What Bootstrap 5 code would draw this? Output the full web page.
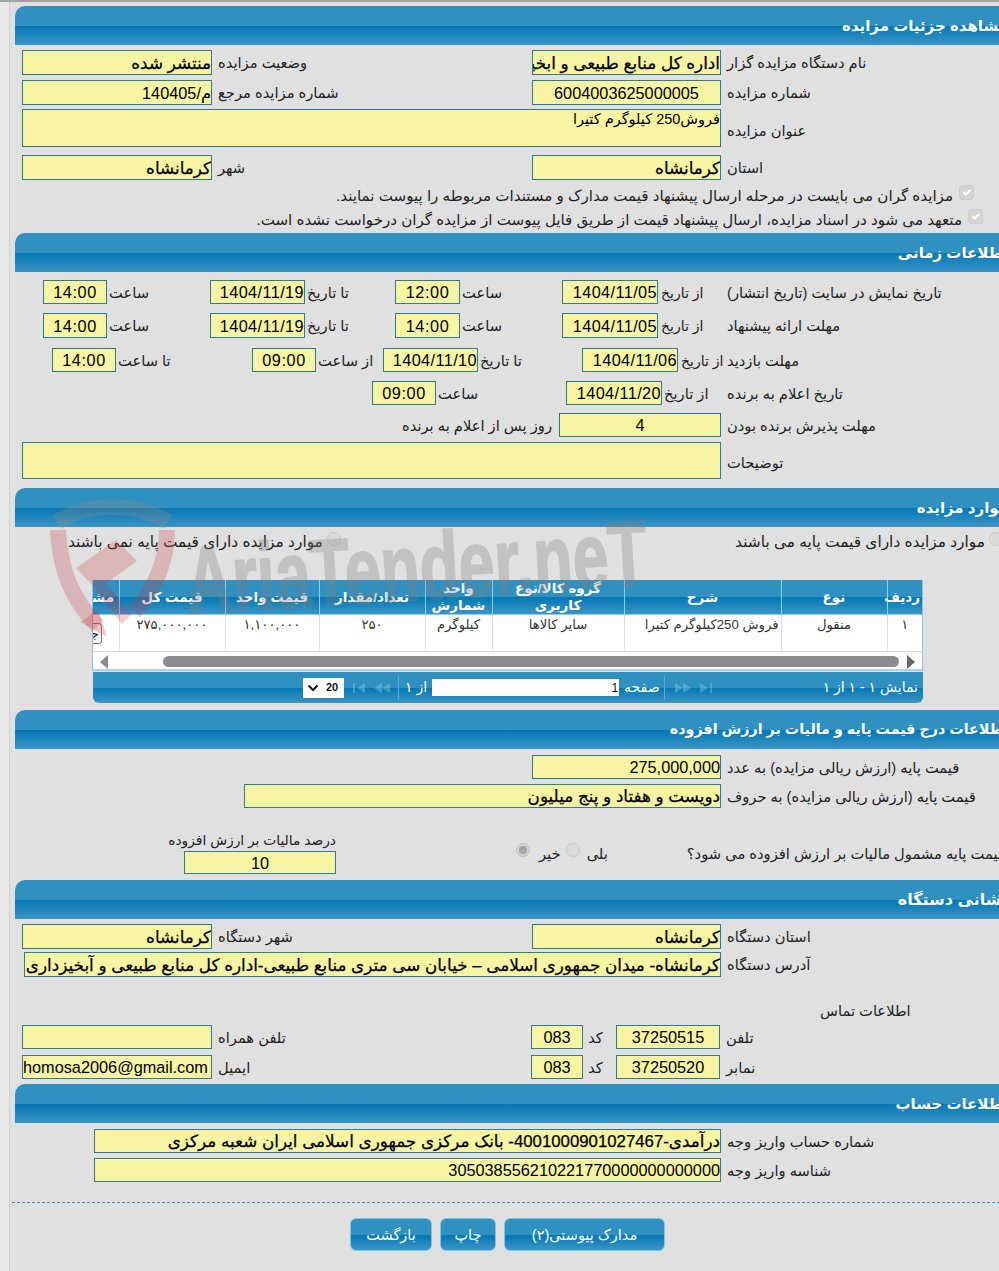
<!DOCTYPE html>
<html lang="fa">
<head>
<meta charset="utf-8">
<title>مشاهده جزئیات مزایده</title>
<link href="https://cdn.jsdelivr.net/npm/bootstrap@5.3.0/dist/css/bootstrap.min.css" rel="stylesheet">
<style>
html,body{height:1271px;overflow:hidden}
body{background:#e0e0e0;font-family:"Liberation Sans","DejaVu Sans",sans-serif;font-size:14.7px;color:#222;border-top:2px solid #a4a4a4}
.stripe{position:absolute;left:0;top:2px;width:10px;height:1269px;background:#e8e8e8;border-right:1px solid #d0d0d0}
.page{position:relative;width:1015px;padding:4px 0 0 15px}
.bar{height:39px;background:linear-gradient(#3090c0 0,#3090c0 50%,#0478b4 51%,#3b94c6 100%);border-top-left-radius:10px;color:#fff;font-weight:700;font-size:15px;line-height:39px;text-align:right;padding-right:7px;white-space:nowrap}
.bar.sm{font-size:14.3px}.bar.lg{font-size:16px}
.sec{margin-left:-15px}
.sb1{height:227px}.sb2{height:255px}.sb3{height:222px}.sb4{height:170px}.sb5{height:204px}
.sec>.bar{margin-left:15px}
.ln{display:grid;align-items:center;height:25px}
.lab{padding:2px 0 0 6px;text-align:left;white-space:nowrap;overflow:visible}
.lab.lo{padding-top:6px}
.fld.form-control{height:100%;min-height:0;background:#f7f4a3;border:1px solid #2f7c8e;border-radius:0;padding:1px 0 0;font-size:16.3px;color:#000;box-shadow:none;font-family:"Liberation Sans","DejaVu Sans",sans-serif;line-height:1.15;resize:none}
.fld.big{font-size:16.8px;-webkit-text-stroke:.25px #000}
.fld.dt{text-align:right;letter-spacing:.4px}
.fld.tm{letter-spacing:.6px}
textarea.fld.form-control{font-size:14.5px}
.t3{margin-top:3px}.t4{margin-top:4px}.t5{margin-top:5px}.t6{margin-top:6px}.t8{margin-top:8px}.t9{margin-top:9px}.t10{margin-top:10px}.t25{margin-top:25px}.t26{margin-top:26px}
.h24{height:24px}.h23{height:23px}.h38{height:38px}.h37{height:37px}
.two{padding-left:22px;grid-template-columns:190px 320px 189px 1fr}
.wide{padding-left:22px;grid-template-columns:699px 1fr}
.wide24{padding-left:24px;grid-template-columns:697px 1fr}
.chk{justify-content:flex-end;gap:6px;height:24px;font-size:15.1px}
.chk .form-check-input{width:15px;height:15px;margin:-8px 0 0;background-color:#d4d4d4;border-color:#ccc;opacity:1;flex:none}
.ck1{padding-right:41px}.ck2{padding-right:32px}
.dr{padding-left:43px;grid-template-columns:64px 103px 95px 90px 65px 102px 96px 69px 1fr}
.dr3{padding-left:52px;grid-template-columns:64px 136px 64px 67px 95px 104px 96px 49px 1fr}
.dr4{padding-left:372px;grid-template-columns:64px 130px 96px 65px 1fr}
.dr5{padding-left:402px;grid-template-columns:157px 162px 1fr}
.lab.tight{padding-left:2px}
.lab.hold{padding-left:0}
.lab.near{padding-left:3px;font-size:14px}
.radios{height:20px;margin-top:5px;padding-left:68px;padding-right:12px;justify-content:space-between;font-size:15.4px}
.rdo.form-check-input{width:14px;height:14px;margin:-6px 0 0;background-color:#dcdcdc;border-color:#c8c8c8;opacity:1;flex:none}
.rdo.form-check-input:checked{background-color:#d4d4d4;border-color:#c0c0c0;background-image:radial-gradient(circle,#a8a8a8 0,#a8a8a8 4px,transparent 4.5px)}
.grp{gap:4px;align-items:center}
.tw{width:831px;margin:28px 0 0 92px}
.tscroll{height:91px;overflow:hidden;background:#fff;border:1px solid #8cc4e4;border-top:0;border-bottom:2px solid #a6d3ee}
.tbl.table{table-layout:fixed;width:865px;margin:0;--bs-table-bg:transparent;border-collapse:collapse}
.c1{width:35px}.c2{width:106px}.c3{width:157px}.c4{width:132px}.c5{width:67px}.c6{width:106px}.c7{width:94px}.c8{width:106px}.c9{width:62px}
.tbl th{height:34px;padding:0 2px;background:linear-gradient(#3090c0 0,#3090c0 50%,#0478b4 51%,#3b94c6 100%);color:#fff;font-size:13.5px;line-height:17px;text-align:center;vertical-align:middle;border:0;border-left:1px solid #8ad2f4;border-bottom:1px solid #8ad2f4;white-space:normal}
.tbl td{height:37px;padding:0 2px;font-size:13.2px;color:#333;text-align:center;vertical-align:top;border:0;border-left:1px solid #ddd;border-bottom:1px solid #ddd;white-space:nowrap}
.tbl td.tdesc{text-align:right}
.cellbtn{display:block;width:44px;height:21px;margin:8px 15px 0 0;padding:0;font-size:13px;border:1px solid #777;border-radius:3px;background:#f4f4f4;color:#222}
.track{height:18px;padding:4px 7px 0;}
.thumb{height:11px;background:#8c8c8c;border-radius:6px;flex:1}
.arr{flex:none;margin-top:-1px}
.arrl{margin-right:55px}.arrr{margin-left:8px}
.pager{height:31px;margin:1px 0 0 1px;background:linear-gradient(#3090c0 0,#3090c0 50%,#0478b4 51%,#3b94c6 100%);border-radius:0 0 6px 6px;color:#fff;font-size:14px;padding:3px 5px 3px 210px;align-items:center}
.sel{width:41px;height:20px;padding:0 4px;background:#fff;color:#111;font-size:11px;font-weight:700;margin-right:8px;gap:7px}
.pginp.form-control{width:187px;height:17px;min-height:0;padding:0 1px;border:0;border-radius:0;font-size:12px;margin:0 5px;color:#111}
.ic{opacity:.35;flex:none}
.sep{width:1px;height:24px;background:#5aa7cf;margin:0 6px 0 2px}
.pgl{white-space:nowrap}
.pgsp{margin-left:auto}
.vbase{width:189px}.vword{width:477px}
.v3{padding-left:168px;height:41px;align-items:start;grid-template-columns:168px 1fr}
.vtx{height:18px;line-height:16px;white-space:nowrap;text-align:right;font-size:13.8px}
.fld.vin.form-control{display:block;width:152px;height:23px;margin-left:16px}
.vq{height:100%;padding:2px 0 0 180px;align-items:flex-start;white-space:nowrap}
.vq span{margin-top:8px}
.vq .rdo.form-check-input{margin:8px 0 0}
.vq .q3.form-check-input{margin-left:5px}
.q1{margin-left:9px}.q5{margin-left:7px}.vq .q4{margin-left:79px}
.ctitle{height:16px;line-height:16px;padding-left:820px}
.ct{padding-left:22px;grid-template-columns:190px 319px 52px 33px 104px 1fr;height:24px}
.acc{padding-left:94px;grid-template-columns:627px 1fr;height:24px}
.lab.c{padding-left:5px}
.dash{margin:20px 0 0 12px;width:1003px;border-top:1px dashed #3d8fc0;height:0}
.acts{margin:15px 0 0 350px;gap:8px}
.btn.act{height:33px;padding:0;background:linear-gradient(#3090c0 0,#3090c0 50%,#0478b4 51%,#3b94c6 100%);border:1px solid #7ccaf0;border-radius:6px;color:#fff;font-size:14.5px;line-height:30px}
.b1{width:82px}.b2{width:56px}.b3{width:161px}
.wm{position:absolute;left:0;top:0;pointer-events:none}
</style>
</head>
<body>
<div class="stripe"></div>
<div class="page">

<section class="sec sb1">
  <div class="bar" dir="rtl">مشاهده جزئیات مزایده</div>
  <div class="ln two t5">
    <input class="form-control fld big" dir="rtl" readonly value="منتشر شده">
    <div class="lab" dir="rtl">وضعیت مزایده</div>
    <input class="form-control fld big" dir="rtl" readonly value="اداره کل منابع طبیعی و ابخیزداری استان کرمانشاه">
    <div class="lab" dir="rtl">نام دستگاه مزایده گزار</div>
  </div>
  <div class="ln two t5">
    <input class="form-control fld" dir="rtl" readonly value="م/140405">
    <div class="lab" dir="rtl">شماره مزایده مرجع</div>
    <input class="form-control fld text-center" dir="rtl" readonly value="6004003625000005">
    <div class="lab" dir="rtl">شماره مزایده</div>
  </div>
  <div class="ln wide t4 h38">
    <textarea class="form-control fld" dir="rtl" readonly>فروش250 کیلوگرم کتیرا</textarea>
    <div class="lab lo" dir="rtl">عنوان مزایده</div>
  </div>
  <div class="ln two t8">
    <input class="form-control fld big" dir="rtl" readonly value="کرمانشاه">
    <div class="lab" dir="rtl">شهر</div>
    <input class="form-control fld big" dir="rtl" readonly value="کرمانشاه">
    <div class="lab" dir="rtl">استان</div>
  </div>
  <div class="d-flex align-items-center t4 chk ck1" dir="ltr">
    <span dir="rtl">مزایده گران می بایست در مرحله ارسال پیشنهاد قیمت مدارک و مستندات مربوطه را پیوست نمایند.</span>
    <input class="form-check-input" type="checkbox" checked disabled>
  </div>
  <div class="d-flex align-items-center chk ck2" dir="ltr">
    <span dir="rtl">متعهد می شود در اسناد مزایده، ارسال پیشنهاد قیمت از طریق فایل پیوست از مزایده گران درخواست نشده است.</span>
    <input class="form-check-input" type="checkbox" checked disabled>
  </div>
</section>

<section class="sec sb2">
  <div class="bar" dir="rtl">اطلاعات زمانی</div>
  <div class="ln dr t8 h24">
    <input class="form-control fld tm text-center" readonly value="14:00">
    <div class="lab tight" dir="rtl">ساعت</div>
    <input class="form-control fld dt" readonly value="1404/11/19">
    <div class="lab tight" dir="rtl">تا تاریخ</div>
    <input class="form-control fld tm text-center" readonly value="12:00">
    <div class="lab tight" dir="rtl">ساعت</div>
    <input class="form-control fld dt" readonly value="1404/11/05">
    <div class="lab near" dir="rtl">از تاریخ</div>
    <div class="lab hold" dir="rtl">تاریخ نمایش در سایت (تاریخ انتشار)</div>
  </div>
  <div class="ln dr t9">
    <input class="form-control fld tm text-center" readonly value="14:00">
    <div class="lab tight" dir="rtl">ساعت</div>
    <input class="form-control fld dt" readonly value="1404/11/19">
    <div class="lab tight" dir="rtl">تا تاریخ</div>
    <input class="form-control fld tm text-center" readonly value="14:00">
    <div class="lab tight" dir="rtl">ساعت</div>
    <input class="form-control fld dt" readonly value="1404/11/05">
    <div class="lab near" dir="rtl">از تاریخ</div>
    <div class="lab hold" dir="rtl">مهلت ارائه پیشنهاد</div>
  </div>
  <div class="ln dr3 t10 h24">
    <input class="form-control fld tm text-center" readonly value="14:00">
    <div class="lab tight" dir="rtl">تا ساعت</div>
    <input class="form-control fld tm text-center" readonly value="09:00">
    <div class="lab tight" dir="rtl">از ساعت</div>
    <input class="form-control fld dt" readonly value="1404/11/10">
    <div class="lab tight" dir="rtl">تا تاریخ</div>
    <input class="form-control fld dt" readonly value="1404/11/06">
    <div class="lab near" dir="rtl">از تاریخ</div>
    <div class="lab hold" dir="rtl">مهلت بازدید</div>
  </div>
  <div class="ln dr4 t9 h24">
    <input class="form-control fld tm text-center" readonly value="09:00">
    <div class="lab tight" dir="rtl">ساعت</div>
    <input class="form-control fld dt" readonly value="1404/11/20">
    <div class="lab tight" dir="rtl">از تاریخ</div>
    <div class="lab hold" dir="rtl">تاریخ اعلام به برنده</div>
  </div>
  <div class="ln dr5 t8 h23">
    <div class="lab hold" dir="rtl">روز پس از اعلام به برنده</div>
    <input class="form-control fld text-center" readonly value="4">
    <div class="lab" dir="rtl">مهلت پذیرش برنده بودن</div>
  </div>
  <div class="ln wide t6 h37">
    <textarea class="form-control fld" dir="rtl" readonly></textarea>
    <div class="lab lo" dir="rtl">توضیحات</div>
  </div>
</section>

<section class="sec sb3">
  <div class="bar" dir="rtl">موارد مزایده</div>
  <div class="d-flex radios">
    <div class="d-flex grp">
      <span dir="rtl">موارد مزایده دارای قیمت پایه نمی باشند</span>
      <input class="form-check-input rdo" type="radio" disabled>
    </div>
    <div class="d-flex grp">
      <span dir="rtl">موارد مزایده دارای قیمت پایه می باشند</span>
      <input class="form-check-input rdo" type="radio" disabled>
    </div>
  </div>
  <div class="tw">
    <div class="tscroll" dir="rtl">
      <table class="table tbl">
        <colgroup><col class="c1"><col class="c2"><col class="c3"><col class="c4"><col class="c5"><col class="c6"><col class="c7"><col class="c8"><col class="c9"></colgroup>
        <thead><tr><th>ردیف</th><th>نوع</th><th>شرح</th><th>گروه کالا/نوع کاربری</th><th>واحد شمارش</th><th>تعداد/مقدار</th><th>قیمت واحد</th><th>قیمت کل</th><th>مشاهده</th></tr></thead>
        <tbody><tr><td>۱</td><td>منقول</td><td class="tdesc">فروش 250کیلوگرم کتیرا</td><td>سایر کالاها</td><td>کیلوگرم</td><td>۲۵۰</td><td>۱,۱۰۰,۰۰۰</td><td>۲۷۵,۰۰۰,۰۰۰</td><td><button class="cellbtn" type="button">جزئیات</button></td></tr></tbody>
      </table>
      <div class="d-flex track" dir="ltr">
        <svg class="arr arrl" width="8" height="14" viewBox="0 0 8 14"><path d="M8 0L0 7l8 7z" fill="#8c8c8c"/></svg>
        <div class="thumb"></div>
        <svg class="arr arrr" width="8" height="14" viewBox="0 0 8 14"><path d="M0 0l8 7-8 7z" fill="#666"/></svg>
      </div>
    </div>
    <div class="d-flex pager" dir="ltr">
      <div class="d-flex align-items-center sel"><svg width="12" height="8" viewBox="0 0 12 8"><path d="M1.5 1.5L6 6l4.500-4.500" fill="none" stroke="#111" stroke-width="2"/></svg><span>20</span></div>
      <svg class="ic" width="14" height="10" viewBox="0 0 14 10"><path d="M1 0h2v10H1zM13 0v10L5 5z" fill="#9fd0ea"/></svg>
      <svg class="ic ms-2" width="16" height="10" viewBox="0 0 16 10"><path d="M8 0v10L0 5zM16 0v10L8 5z" fill="#9fd0ea"/></svg>
      <div class="sep ms-2"></div>
      <span class="pgl" dir="rtl">از ۱</span>
      <input class="form-control pginp" dir="rtl" readonly value="1">
      <span class="pgl" dir="rtl">صفحه</span>
      <div class="sep ms-1"></div>
      <svg class="ic ms-1" width="16" height="10" viewBox="0 0 16 10"><path d="M0 0v10l8-5zM8 0v10l8-5z" fill="#9fd0ea"/></svg>
      <svg class="ic ms-2" width="14" height="10" viewBox="0 0 14 10"><path d="M1 0v10l8-5zM11 0h2v10h-2z" fill="#9fd0ea"/></svg>
      <span class="pgl pgsp" dir="rtl">نمایش ۱ - ۱ از ۱</span>
    </div>
  </div>
</section>

<section class="sec sb4">
  <div class="bar sm" dir="rtl">اطلاعات درج قیمت پایه و مالیات بر ارزش افزوده</div>
  <div class="ln wide t6 h24">
    <div class="d-flex justify-content-end h-100"><input class="form-control fld vbase" dir="rtl" readonly value="275,000,000"></div>
    <div class="lab" dir="rtl">قیمت پایه (ارزش ریالی مزایده) به عدد</div>
  </div>
  <div class="ln wide t5 h24">
    <div class="d-flex justify-content-end h-100"><input class="form-control fld big vword" dir="rtl" readonly value="دویست و هفتاد و پنج میلیون"></div>
    <div class="lab" dir="rtl">قیمت پایه (ارزش ریالی مزایده) به حروف</div>
  </div>
  <div class="d-grid v3 t25">
    <div>
      <div class="vtx" dir="rtl">درصد مالیات بر ارزش افزوده</div>
      <input class="form-control fld text-center vin" readonly value="10">
    </div>
    <div class="d-flex vq">
      <input class="form-check-input rdo" type="radio" checked disabled>
      <span class="q1" dir="rtl">خیر</span>
      <input class="form-check-input rdo q3" type="radio" disabled>
      <span class="q5" dir="rtl">بلی</span>
      <span class="q4" dir="rtl">قیمت پایه مشمول مالیات بر ارزش افزوده می شود؟</span>
    </div>
  </div>
</section>

<section class="sec sb5">
  <div class="bar lg" dir="rtl">نشانی دستگاه</div>
  <div class="ln two t5">
    <input class="form-control fld big" dir="rtl" readonly value="کرمانشاه">
    <div class="lab" dir="rtl">شهر دستگاه</div>
    <input class="form-control fld big" dir="rtl" readonly value="کرمانشاه">
    <div class="lab" dir="rtl">استان دستگاه</div>
  </div>
  <div class="ln wide24 t3">
    <input class="form-control fld big" dir="rtl" readonly value="کرمانشاه- میدان جمهوری اسلامی – خیابان سی متری منابع طبیعی-اداره کل منابع طبیعی و آبخیزداری استان کرمانشاه">
    <div class="lab" dir="rtl">آدرس دستگاه</div>
  </div>
  <div class="ctitle t26" dir="ltr"><span dir="rtl">اطلاعات تماس</span></div>
  <div class="ln ct t6">
    <input class="form-control fld" readonly value="">
    <div class="lab" dir="rtl">تلفن همراه</div>
    <input class="form-control fld text-center" readonly value="083">
    <div class="lab c" dir="rtl">کد</div>
    <input class="form-control fld text-center" readonly value="37250515">
    <div class="lab" dir="rtl">تلفن</div>
  </div>
  <div class="ln ct t6">
    <input class="form-control fld" dir="ltr" readonly value="homosa2006@gmail.com">
    <div class="lab" dir="rtl">ایمیل</div>
    <input class="form-control fld text-center" readonly value="083">
    <div class="lab c" dir="rtl">کد</div>
    <input class="form-control fld text-center" readonly value="37250520">
    <div class="lab" dir="rtl">نمابر</div>
  </div>
</section>

<section class="sec">
  <div class="bar" dir="rtl">اطلاعات حساب</div>
  <div class="ln acc t6">
    <input class="form-control fld big" dir="rtl" readonly value="درآمدی-4001000901027467- بانک مرکزی جمهوری اسلامی ایران شعبه مرکزی">
    <div class="lab" dir="rtl">شماره حساب واریز وجه</div>
  </div>
  <div class="ln acc t5">
    <input class="form-control fld" dir="rtl" readonly value="305038556210221770000000000000">
    <div class="lab" dir="rtl">شناسه واریز وجه</div>
  </div>
  <div class="dash"></div>
  <div class="d-flex acts">
    <button class="btn act b1" type="button">بازگشت</button>
    <button class="btn act b2" type="button">چاپ</button>
    <button class="btn act b3" type="button">مدارک پیوستی(۲)</button>
  </div>
</section>
</div>

<svg class="wm" width="999" height="700" viewBox="0 0 999 700">
  <path d="M57 522C90 502 136 502 168 522" fill="none" stroke="#8d8d8d" stroke-opacity=".3" stroke-width="16"/>
  <path d="M58 530C60 570 72 600 98 626M167 530C167 558 158 585 134 612" fill="none" stroke="#c9343a" stroke-opacity=".25" stroke-width="16"/>
  <path d="M80 622L107 637L98 610Z" fill="#c9343a" fill-opacity=".25"/>
  <path d="M76 568L116 540L137 561L97 590ZM95 590L104 582L132 614L122 624Z" fill="#c9343a" fill-opacity=".24"/>
  <g opacity=".3">
    <text x="188" y="614" font-family="Liberation Sans" font-weight="700" font-size="95" textLength="462" lengthAdjust="spacingAndGlyphs" fill="#808080" stroke="#808080" stroke-width="2" transform="rotate(-3.500 188 614)">AriaTender.neT</text>
  </g>
</svg>
</body>
</html>
